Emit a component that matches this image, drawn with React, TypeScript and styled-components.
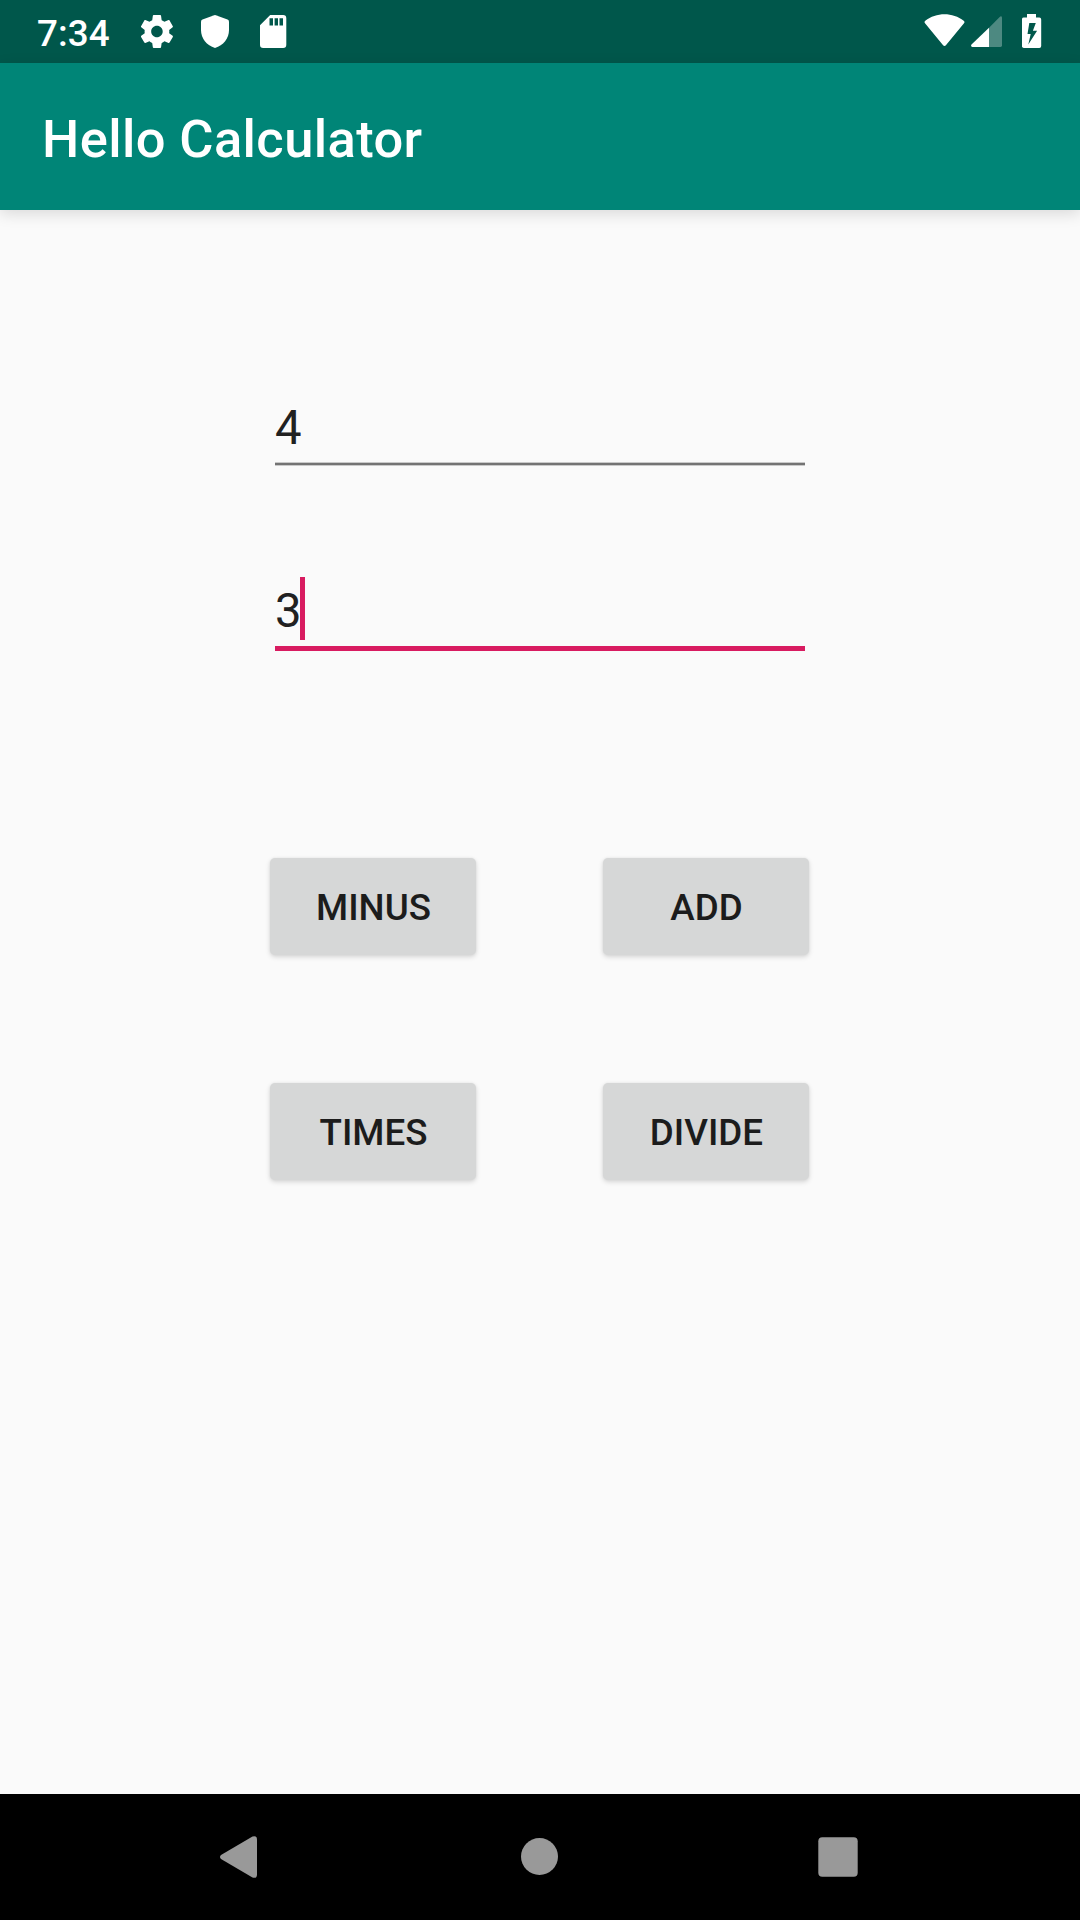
import React from "react";
import styled, { createGlobalStyle } from "styled-components";

const GlobalStyle = createGlobalStyle`
  * { box-sizing: border-box; }
  body { margin: 0; background: #fafafa; font-family: Roboto, "Liberation Sans", sans-serif; }
`;

const Screen = styled.div`
  display: flex;
  flex-direction: column;
  width: 1080px;
  height: 1920px;
  background: #fafafa;
  overflow: hidden;
`;

const StatusBar = styled.header`
  flex: none;
  display: flex;
  align-items: flex-start;
  justify-content: space-between;
  height: 63px;
  padding: 0 37px 0 37px;
  background: #00574b;
  color: #fff;
`;

const StatusGroup = styled.div`
  display: flex;
  align-items: flex-start;
`;

const Clock = styled.span`
  width: 98px;
  padding-top: 4px;
  font-size: 36.75px;
  font-weight: 500;
  letter-spacing: 0.1px;
  line-height: 59px;
  white-space: nowrap;
`;

const StatusIcon = styled.svg<{ $w: number; $gap?: number }>`
  flex: none;
  display: block;
  width: ${(p) => p.$w}px;
  height: 63px;
  margin-left: ${(p) => p.$gap ?? 0}px;
  fill: #fff;
`;

const AppBar = styled.div`
  flex: none;
  display: flex;
  align-items: center;
  height: 147px;
  padding: 5px 42px 0;
  background: #008577;
  box-shadow: 0 4px 14px rgba(0, 0, 0, 0.13);
`;

const Title = styled.h1`
  margin: 0;
  color: #fff;
  font-size: 52.5px;
  font-weight: 500;
  letter-spacing: 0.38px;
  line-height: 62px;
`;

const Content = styled.main`
  flex: 1;
  display: flex;
  flex-direction: column;
  padding: 186px 271px 0 270px;
`;

const Fields = styled.div`
  display: flex;
  flex-direction: column;
  gap: 111px;
  padding: 0 4px 0 5px;
`;

const Field = styled.div<{ $focused?: boolean }>`
  display: flex;
  flex-direction: column;
  justify-content: space-between;
  height: ${(p) => (p.$focused ? 74 : 70)}px;
`;

const FieldRow = styled.div`
  display: flex;
  align-items: center;
  height: 63px;
  color: #212121;
  font-size: 47.25px;
  line-height: 56px;
`;

const Value = styled.span<{ $shift: number }>`
  width: 25px;
  padding-top: ${(p) => p.$shift}px;
`;

const Caret = styled.span`
  width: 5px;
  height: 63px;
  background: #d81b60;
`;

const Underline = styled.div<{ $focused?: boolean }>`
  height: ${(p) => (p.$focused ? 5 : 4)}px;
  background: ${(p) => (p.$focused ? "#d81b60" : "#737373")};
  border: solid #c9c9c9;
  border-width: ${(p) => (p.$focused ? 0 : "1px 0")};
`;

const Operations = styled.div`
  display: grid;
  grid-template-columns: 206px 206px;
  grid-auto-rows: 97px;
  justify-content: space-between;
  row-gap: 128px;
  margin-top: 207px;
`;

const OperationButton = styled.button`
  display: flex;
  align-items: center;
  justify-content: center;
  padding: 2px 0 0 1px;
  border: 0;
  border-radius: 5px;
  background: #d6d7d7;
  box-shadow: 0 2px 5px rgba(0, 0, 0, 0.15), 0 0 3px rgba(0, 0, 0, 0.05);
  color: #1c1c1c;
  font-family: inherit;
  font-size: 36.75px;
  font-weight: 500;
  line-height: 43px;
  text-transform: uppercase;
`;

const NavBar = styled.nav`
  flex: none;
  display: flex;
  justify-content: space-between;
  align-items: center;
  height: 126px;
  padding: 0 222px 0 220px;
  background: #000;
`;

const NavIcon = styled.svg<{ $shift?: number }>`
  display: block;
  margin-left: ${(p) => p.$shift ?? 0}px;
  fill: #999;
`;

export default function App() {
  return (
    <Screen>
      <GlobalStyle />
      <StatusBar>
        <StatusGroup>
          <Clock>7:34</Clock>
          <StatusIcon $w={40} $gap={2} viewBox="137 0 40 63">
            <path
              fillRule="evenodd"
              transform="translate(137.2 11.8) scale(1.645)"
              d="M19.43 12.98c.04-.32.07-.64.07-.98s-.03-.66-.07-.98l2.11-1.65c.19-.15.24-.42.12-.64l-2-3.46c-.12-.22-.39-.3-.61-.22l-2.49 1c-.52-.4-1.08-.73-1.69-.98l-.38-2.65C14.46 2.18 14.25 2 14 2h-4c-.25 0-.46.18-.49.42l-.38 2.65c-.61.25-1.17.59-1.69.98l-2.49-1c-.23-.09-.49 0-.61.22l-2 3.46c-.13.22-.07.49.12.64l2.11 1.65c-.04.32-.07.65-.07.98s.03.66.07.98l-2.11 1.65c-.19.15-.24.42-.12.64l2 3.46c.12.22.39.3.61.22l2.49-1c.52.4 1.08.73 1.69.98l.38 2.65c.03.24.24.42.49.42h4c.25 0 .46-.18.49-.42l.38-2.65c.61-.25 1.17-.59 1.69-.98l2.49 1c.23.09.49 0 .61-.22l2-3.46c.12-.22.07-.49-.12-.64l-2.11-1.65zM12 15.5c-1.93 0-3.5-1.57-3.5-3.5s1.57-3.5 3.5-3.5 3.5 1.57 3.5 3.5-1.57 3.5-3.5 3.5z"
            />
          </StatusIcon>
          <StatusIcon $w={30} $gap={23} viewBox="200 0 30 63">
            <path d="M214.2 15.2q.8-.3 1.6 0l11.700 4.400q1.500.6 1.500 2.200v8.300c0 8.400-5.700 15.500-14 18-8.300-2.500-14-9.600-14-18v-8.300q0-1.600 1.500-2.200z" />
          </StatusIcon>
          <StatusIcon $w={28} $gap={29} viewBox="259 0 28 63">
            <path
              fillRule="evenodd"
              d="M270.200 15h12.900q3.200 0 3.200 3.200v26.600q0 3.200-3.200 3.200h-19.900q-3.200 0-3.200-3.200v-19.600zM269.500 18.300v7.200h3.500v-7.200zM274.600 18.300v7.200h3.400v-7.200zM279.500 18.300v7.200h3.500v-7.200z"
            />
          </StatusIcon>
        </StatusGroup>
        <StatusGroup>
          <StatusIcon $w={42} viewBox="924 0 42 63">
            <path d="M925 23.200q-1.200-1.200.3-2.500c10.800-8.700 27.600-8.700 38.400 0q1.500 1.300.3 2.500l-17.900 21.900q-1.600 1.700-3.200 0z" />
          </StatusIcon>
          <StatusIcon $w={32} $gap={5} viewBox="971 0 32 63">
            <path d="M989 27.800V47h-16.700q-2-.7-.8-2.400z" />
            <path fillOpacity="0.3" d="M989 27.800l10.700-10.900q1.900-1.400 2.300.7v28q0 1.400-1.400 1.400H989z" />
          </StatusIcon>
          <StatusIcon $w={21} $gap={19} viewBox="1022 0 21 63">
            <path
              fillRule="evenodd"
              d="M1027 14h9v3.600h3.300q1.900 0 1.900 1.900v26.500q0 1.900-1.900 1.900h-15.500q-1.900 0-1.900-1.900v-26.500q0-1.900 1.900-1.900h3.200zM1029.300 23l-1.800 11.100h3.200l-2.400 10.400 8.800-13.700h-4.200l2.900-7.800z"
            />
          </StatusIcon>
        </StatusGroup>
      </StatusBar>
      <AppBar>
        <Title>Hello Calculator</Title>
      </AppBar>
      <Content>
        <Fields>
          <Field>
            <FieldRow>
              <Value $shift={1}>4</Value>
            </FieldRow>
            <Underline />
          </Field>
          <Field $focused>
            <FieldRow>
              <Value $shift={4}>3</Value>
              <Caret />
            </FieldRow>
            <Underline $focused />
          </Field>
        </Fields>
        <Operations>
          {["Minus", "Add", "Times", "Divide"].map((name) => (
            <OperationButton key={name} type="button">
              {name}
            </OperationButton>
          ))}
        </Operations>
      </Content>
      <NavBar>
        <NavIcon width="37" height="42" viewBox="0 0 37 42">
          <path d="M1 19.100L32.500.5Q37-.9 37 3.500v35q0 4.400-4.500 3L1 22.900q-2-1.900 0-3.800z" />
        </NavIcon>
        <NavIcon $shift={4} width="37" height="39" viewBox="0 0 37 39">
          <circle cx="18.500" cy="18.500" r="18.500" />
        </NavIcon>
        <NavIcon width="40" height="40" viewBox="0 0 40 40">
          <rect x=".3" y=".3" width="39.400" height="39.400" rx="4" />
        </NavIcon>
      </NavBar>
    </Screen>
  );
}
